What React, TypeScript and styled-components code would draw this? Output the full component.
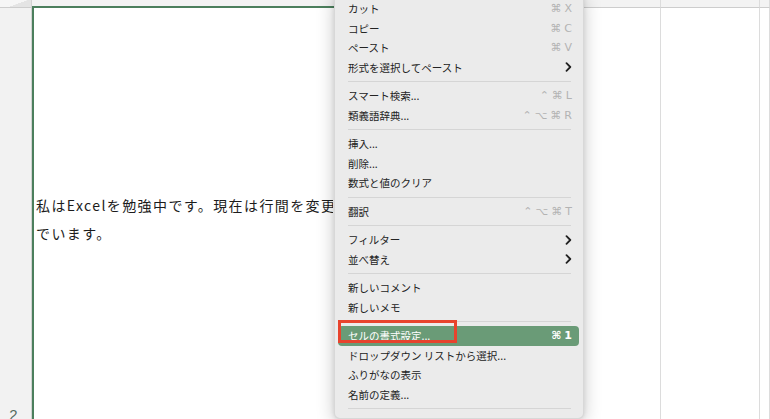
import React from 'react'
import styled, { createGlobalStyle } from 'styled-components'

const GlobalStyle = createGlobalStyle`
  html, body {
    margin: 0;
    padding: 0;
    background: #ffffff;
    overflow: hidden;
  }
  body {
    font-family: "Noto Sans CJK JP", "Noto Sans", sans-serif;
  }
`

const COLUMNS = '32px 528px 101px 99px 1fr'

const Sheet = styled.div`
  position: relative;
  width: 770px;
  height: 419px;
  display: flex;
  flex-direction: column;
  overflow: hidden;
  background: #ffffff;
`

const HeaderRow = styled.div`
  display: grid;
  grid-template-columns: ${COLUMNS};
  height: 8px;
  background: #f3f3f3;
`

const Corner = styled.div`
  background: linear-gradient(160deg, #f6f6f6 0%, #f6f6f6 55%, #e4e4e4 56%, #e4e4e4 100%);
  border-right: 1px solid #d2d2d2;
  border-bottom: 1px solid #cdcdcd;
  box-sizing: border-box;
`

const ColHead = styled.div<{ $selected?: boolean }>`
  box-sizing: border-box;
  border-right: 1px solid #dcdcdc;
  border-bottom: ${(p) => (p.$selected ? '2px solid #4c7f5d' : '1px solid #cdcdcd')};
`

const Body = styled.div`
  flex: 1;
  display: grid;
  grid-template-columns: ${COLUMNS};
  min-height: 0;
`

const RowHeader = styled.div`
  background: #f2f2f2;
  border-right: 1px solid #d2d2d2;
  display: flex;
  flex-direction: column;
  justify-content: flex-end;
  align-items: center;
  overflow: hidden;
`

const RowLabel = styled.span`
  font-family: "Liberation Sans", Arial, sans-serif;
  font-size: 15px;
  line-height: 20px;
  color: #556b5e;
  margin-bottom: -6px;
  margin-left: -4px;
`

const Cell = styled.div<{ $selected?: boolean }>`
  border-right: 1px solid #dcdcdc;
  border-left: ${(p) => (p.$selected ? '2px solid #4c7f5d' : 'none')};
  padding: 183px 0 0 2px;
  overflow: hidden;
`

const CellLine = styled.div`
  width: 297px;
  overflow: hidden;
  font-size: 14px;
  line-height: 28px;
  letter-spacing: 1.4px;
  color: #1c1c1c;
  white-space: nowrap;
`

const Menu = styled.div`
  position: absolute;
  left: 334px;
  top: -7px;
  width: 250px;
  padding: 5px 0;
  background: #ebebeb;
  border: 1px solid rgba(0, 0, 0, 0.08);
  border-radius: 6px;
  box-shadow: 0 4px 18px rgba(0, 0, 0, 0.22), 0 0 4px rgba(0, 0, 0, 0.1);
  box-sizing: border-box;
`

const Item = styled.div<{ $active?: boolean }>`
  position: relative;
  height: 19.5px;
  margin: 0 4px 0 3px;
  padding: 0 7px 0 10px;
  display: flex;
  align-items: center;
  justify-content: space-between;
  border-radius: 4px;
  background: ${(p) => (p.$active ? '#6a9b77' : 'transparent')};
  color: ${(p) => (p.$active ? '#ffffff' : '#232323')};
  font-size: 10.5px;
`

const Label = styled.span`
  white-space: nowrap;
`

const Shortcut = styled.span<{ $active?: boolean }>`
  display: flex;
  gap: 3px;
  font-family: "DejaVu Sans", "Liberation Sans", sans-serif;
  font-size: 11px;
  font-weight: ${(p) => (p.$active ? 700 : 400)};
  color: ${(p) => (p.$active ? '#ffffff' : '#b3b3b3')};
`

const Separator = styled.div`
  height: 9px;
  display: flex;
  align-items: center;
  padding: 0 12px 0 13px;
  &::after {
    content: '';
    flex: 1;
    height: 1px;
    background: #d5d5d5;
  }
`

const Highlight = styled.div`
  position: absolute;
  left: 0;
  top: -6px;
  width: 119px;
  height: 23px;
  border: 3px solid #e8432d;
  box-sizing: border-box;
`

const Chevron = () => (
  <svg width='7' height='10' viewBox='0 0 7 10'>
    <path d='M1.5 1.2 L5.3 5 L1.5 8.8' fill='none' stroke='#202020' strokeWidth='1.8' strokeLinecap='round' strokeLinejoin='round' />
  </svg>
)

type MenuEntry =
  | { kind: 'sep' }
  | { kind: 'item'; label: string; keys?: string[]; submenu?: boolean; active?: boolean }

const sep: MenuEntry = { kind: 'sep' }

const entries: MenuEntry[] = [
  { kind: 'item', label: 'カット', keys: ['⌘', 'X'] },
  { kind: 'item', label: 'コピー', keys: ['⌘', 'C'] },
  { kind: 'item', label: 'ペースト', keys: ['⌘', 'V'] },
  { kind: 'item', label: '形式を選択してペースト', submenu: true },
  sep,
  { kind: 'item', label: 'スマート検索...', keys: ['⌃', '⌘', 'L'] },
  { kind: 'item', label: '類義語辞典...', keys: ['⌃', '⌥', '⌘', 'R'] },
  sep,
  { kind: 'item', label: '挿入...' },
  { kind: 'item', label: '削除...' },
  { kind: 'item', label: '数式と値のクリア' },
  sep,
  { kind: 'item', label: '翻訳', keys: ['⌃', '⌥', '⌘', 'T'] },
  sep,
  { kind: 'item', label: 'フィルター', submenu: true },
  { kind: 'item', label: '並べ替え', submenu: true },
  sep,
  { kind: 'item', label: '新しいコメント' },
  { kind: 'item', label: '新しいメモ' },
  sep,
  { kind: 'item', label: 'セルの書式設定...', keys: ['⌘', '1'], active: true },
  { kind: 'item', label: 'ドロップダウン リストから選択...' },
  { kind: 'item', label: 'ふりがなの表示' },
  { kind: 'item', label: '名前の定義...' },
  sep,
]

const ContextMenu: React.FC = () => (
  <Menu>
    {entries.map((e, i) => {
      if (e.kind === 'sep') return <Separator key={i} />
      return (
        <Item key={i} $active={e.active}>
          <Label>{e.label}</Label>
          {e.keys && (
            <Shortcut $active={e.active}>
              {e.keys.map((k, j) => (
                <span key={j}>{k}</span>
              ))}
            </Shortcut>
          )}
          {e.submenu && <Chevron />}
          {e.active && <Highlight />}
        </Item>
      )
    })}
  </Menu>
)

const App: React.FC = () => {
  return (
    <>
      <GlobalStyle />
      <Sheet>
        <HeaderRow>
          <Corner />
          <ColHead $selected />
          <ColHead />
          <ColHead />
          <ColHead />
        </HeaderRow>
        <Body>
          <RowHeader>
            <RowLabel>2</RowLabel>
          </RowHeader>
          <Cell $selected>
            <CellLine>私はExcelを勉強中です。現在は行間を変更して遊ん</CellLine>
            <CellLine>でいます。</CellLine>
          </Cell>
          <Cell />
          <Cell />
          <Cell />
        </Body>
        <ContextMenu />
      </Sheet>
    </>
  )
}

export default App
